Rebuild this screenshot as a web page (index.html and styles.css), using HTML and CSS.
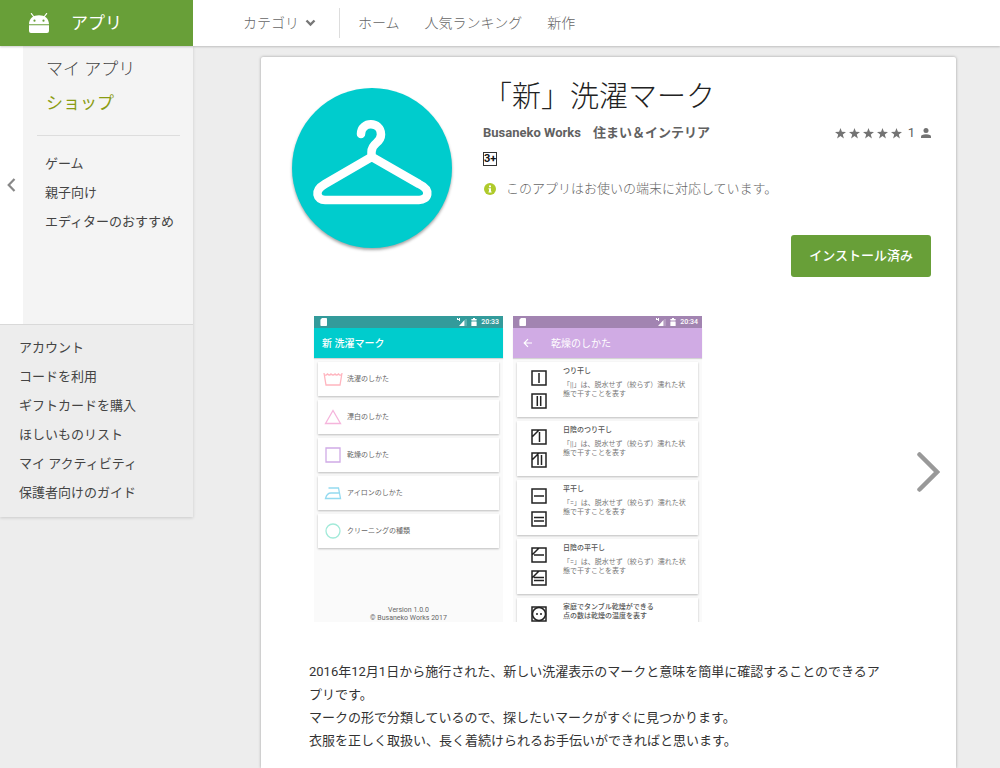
FILE: index.html
```html
<!DOCTYPE html>
<html lang="ja">
<head>
<meta charset="utf-8">
<title>「新」洗濯マーク</title>
<link rel="stylesheet" href="styles.css">
</head>
<body>
<svg class="defs" aria-hidden="true">
  <symbol id="star" viewBox="0 0 11 11"><path d="M5.5 0 6.9 3.7 11 3.9 7.8 6.4 8.9 10.4 5.5 8.1 2.1 10.4 3.2 6.4 0 3.9 4.1 3.7z"/></symbol>
  <symbol id="sd" viewBox="0 0 7 8"><path d="M2 0H6.2Q7 0 7 .8V7.200Q7 8 6.200 8H1.200Q.4 8 .4 7.200V1.800z"/></symbol>
  <symbol id="signal" viewBox="0 0 10 8"><path d="M0 0h1v1h1V0h1v3H2V2H0zM7.500 2v6H2z"/><path d="M8.500 1h1v7h-1z" opacity=".4"/></symbol>
  <symbol id="battery" viewBox="0 0 6 8"><path d="M2 0h2v1h1.500v7h-5V1H2z" opacity=".55"/><path d="M.5 4h5v4h-5zM2 0h2v1h1.500v1h-5V1H2z"/></symbol>
</svg>

<header class="topbar">
  <a class="brand" href="#">
    <svg class="brand-icon" viewBox="0 0 20 20" aria-hidden="true">
      <path d="M2.400 .6 5 4M17.600 .6 15 4" stroke="#fff" stroke-width="1.200" stroke-linecap="round"/>
      <path d="M0 11.300C0 5.500 4.300 2.300 10 2.300S20 5.500 20 11.300zM0 12.300h20V18q0 2-2 2H2q-2 0-2-2z" fill="#fff"/>
      <circle cx="5.500" cy="7.700" r="1.100" fill="#689f38"/><circle cx="14.500" cy="7.700" r="1.100" fill="#689f38"/>
    </svg>
    <span>アプリ</span>
  </a>
  <nav class="nav">
    <button class="nav-category" type="button">カテゴリ
      <svg width="11" height="8" viewBox="0 0 11 8" aria-hidden="true"><path d="M1.500 1.500 5.500 5.500 9.500 1.500" fill="none" stroke="#777" stroke-width="2.400"/></svg>
    </button>
    <div class="nav-links">
      <a href="#">ホーム</a>
      <a href="#">人気ランキング</a>
      <a href="#">新作</a>
    </div>
  </nav>
</header>

<div class="layout">
  <aside class="sidebar">
    <div class="side-main">
      <button class="side-back" type="button" aria-label="戻る">
        <svg width="9" height="14" viewBox="0 0 9 14" aria-hidden="true"><path d="M7.500 1 1.700 7l5.800 6" fill="none" stroke="#888" stroke-width="2.200"/></svg>
      </button>
      <nav class="side-panel">
        <ul class="side-primary">
          <li><a href="#">マイ アプリ</a></li>
          <li><a class="current" href="#">ショップ</a></li>
        </ul>
        <ul class="side-list side-sections">
          <li><a href="#">ゲーム</a></li>
          <li><a href="#">親子向け</a></li>
          <li><a href="#">エディターのおすすめ</a></li>
        </ul>
      </nav>
    </div>
    <nav class="side-account">
      <ul class="side-list">
        <li><a href="#">アカウント</a></li>
        <li><a href="#">コードを利用</a></li>
        <li><a href="#">ギフトカードを購入</a></li>
        <li><a href="#">ほしいものリスト</a></li>
        <li><a href="#">マイ アクティビティ</a></li>
        <li><a href="#">保護者向けのガイド</a></li>
      </ul>
    </nav>
  </aside>

  <main class="content">
    <article class="card">
      <section class="summary">
        <div class="app-icon">
          <svg viewBox="0 0 160 160" role="img" aria-label="ハンガー">
            <path d="M69 46C69 33 89 33 89 46.500C89 56 79.500 54 79.500 64V69M79.500 69 33 96C21 103 25 112 33 112H127C136 112 140 102 127 96L80 69" fill="none" stroke="#fff" stroke-width="8.500" stroke-linecap="round" stroke-linejoin="round"/>
          </svg>
        </div>
        <div class="info">
          <h1>「新」洗濯マーク</h1>
          <div class="meta">
            <a href="#">Busaneko Works</a>
            <a href="#">住まい＆インテリア</a>
            <span class="rating">
              <span class="stars" role="img" aria-label="5つ星">
                <svg><use href="#star"/></svg><svg><use href="#star"/></svg><svg><use href="#star"/></svg><svg><use href="#star"/></svg><svg><use href="#star"/></svg>
              </span>
              <span>1</span>
              <svg class="person" viewBox="0 0 10 10" aria-hidden="true"><circle cx="5" cy="2.500" r="2.500"/><path d="M0 10V8.500Q0 6.500 5 6.300 10 6.500 10 8.500V10z"/></svg>
            </span>
          </div>
          <span class="age">3+</span>
          <p class="compat">
            <svg width="12" height="12" viewBox="0 0 12 12" aria-hidden="true"><circle cx="6" cy="6" r="6" fill="#afca2b"/><path d="M5 2.500h2v1.800H5zM4.500 5.200H7v3.300h.6v1H4.500v-1H5V6.200h-.5z" fill="#fff"/></svg>
            このアプリはお使いの端末に対応しています。
          </p>
          <button class="install" type="button">インストール済み</button>
        </div>
      </section>

      <section class="gallery">
        <div class="shot shot-teal">
          <div class="status"><svg class="sd"><use href="#sd"/></svg><svg class="signal"><use href="#signal"/></svg><svg class="battery"><use href="#battery"/></svg><span>20:33</span></div>
          <div class="appbar">新 洗濯マーク</div>
          <ul class="menu">
            <li><svg viewBox="0 0 20 16"><path d="M1 2 3 14H17L19 2M1 3.500Q3 5 4.500 3Q6.500 5 8 3Q10 5 12 3Q13.500 5 15.500 3Q17 5 19 3.500" stroke="#ffb5bf"/></svg>洗濯のしかた</li>
            <li><svg viewBox="0 0 20 16"><path d="M10 1.500 17.500 14.500H2.500z" stroke="#f5b5dc"/></svg>漂白のしかた</li>
            <li><svg viewBox="0 0 20 16"><path d="M3 1h14v14H3z" stroke="#d0abe6"/></svg>乾燥のしかた</li>
            <li><svg viewBox="0 0 20 16"><path d="M5.500 3H15.500L17.500 13.500H2.500Q4 8 8 8H16.500" stroke="#94daf0"/></svg>アイロンのしかた</li>
            <li><svg viewBox="0 0 20 16"><circle cx="10" cy="8" r="7" stroke="#a2ead9"/></svg>クリーニングの種類</li>
          </ul>
          <p class="version">Version 1.0.0<br>© Busaneko Works 2017</p>
        </div>
        <div class="shot shot-purple">
          <div class="status"><svg class="sd"><use href="#sd"/></svg><svg class="signal"><use href="#signal"/></svg><svg class="battery"><use href="#battery"/></svg><span>20:34</span></div>
          <div class="appbar"><svg width="10" height="10" viewBox="0 0 10 10" aria-hidden="true"><path d="M9 5H1.500M5 1.200 1.200 5 5 8.800" fill="none" stroke="#fff" stroke-width="1.200"/></svg>乾燥のしかた</div>
          <ul class="drying">
            <li>
              <div class="marks"><svg viewBox="0 0 16 16"><path d="M1 1h14v14H1zM8 3v10"/></svg><svg viewBox="0 0 16 16"><path d="M1 1h14v14H1zM6.300 3v10M9.700 3v10"/></svg></div>
              <div><h2>つり干し</h2><p>「||」は、脱水せず（絞らず）濡れた状<br>態で干すことを表す</p></div>
            </li>
            <li>
              <div class="marks"><svg viewBox="0 0 16 16"><path d="M1 1h14v14H1zM1 8 8 1M8.500 3v10"/></svg><svg viewBox="0 0 16 16"><path d="M1 1h14v14H1zM1 8 8 1M7 3v10M10.500 3v10"/></svg></div>
              <div><h2>日陰のつり干し</h2><p>「||」は、脱水せず（絞らず）濡れた状<br>態で干すことを表す</p></div>
            </li>
            <li>
              <div class="marks"><svg viewBox="0 0 16 16"><path d="M1 1h14v14H1zM3 8h10"/></svg><svg viewBox="0 0 16 16"><path d="M1 1h14v14H1zM3 6.500h10M3 10h10"/></svg></div>
              <div><h2>平干し</h2><p>「=」は、脱水せず（絞らず）濡れた状<br>態で干すことを表す</p></div>
            </li>
            <li>
              <div class="marks"><svg viewBox="0 0 16 16"><path d="M1 1h14v14H1zM1 8 8 1M3 8h10"/></svg><svg viewBox="0 0 16 16"><path d="M1 1h14v14H1zM1 8 8 1M3 7.500h10M3 10.500h10"/></svg></div>
              <div><h2>日陰の平干し</h2><p>「=」は、脱水せず（絞らず）濡れた状<br>態で干すことを表す</p></div>
            </li>
            <li>
              <div class="marks"><svg viewBox="0 0 16 16"><path d="M1 1h14v14H1z"/><circle cx="8" cy="8" r="6.500"/><path d="M5 8h2M9 8h2"/></svg></div>
              <div><h2>家庭でタンブル乾燥ができる<br>点の数は乾燥の温度を表す</h2></div>
            </li>
          </ul>
        </div>
        <button class="next" type="button" aria-label="次へ">
          <svg width="23" height="40" viewBox="0 0 23 40" aria-hidden="true"><path d="M2.500 2.500 20 20 2.500 37.500" fill="none" stroke="#999" stroke-width="4.500" stroke-linecap="round"/></svg>
        </button>
      </section>

      <section class="description">
        <p>2016年12月1日から施行された、新しい洗濯表示のマークと意味を簡単に確認することのできるアプリです。</p>
        <p>マークの形で分類しているので、探したいマークがすぐに見つかります。</p>
        <p>衣服を正しく取扱い、長く着続けられるお手伝いができればと思います。</p>
      </section>
    </article>
  </main>
</div>
</body>
</html>
```

FILE: styles.css
```css
* { box-sizing: border-box; }

body {
  margin: 0;
  min-height: 100vh;
  display: flex;
  flex-direction: column;
  background: #ededed;
  color: #333;
  font: 13px/20px Roboto, "Noto Sans CJK JP", sans-serif;
}

h1, h2, p, ul { margin: 0; padding: 0; font-weight: 400; }
ul { list-style: none; }
a { color: inherit; text-decoration: none; }
button { border: 0; padding: 0; background: none; color: inherit; font: inherit; cursor: pointer; }
svg { display: block; flex: none; }
.defs { position: absolute; width: 0; height: 0; }

/* Top bar */
.topbar {
  display: flex;
  height: 46px;
  background: #fff;
  box-shadow: 0 1px 2px rgba(0, 0, 0, .2);
  position: relative;
}
.brand {
  width: 193px;
  padding-left: 29px;
  display: flex;
  align-items: center;
  gap: 22px;
  background: #689f38;
  color: #fff;
  font-size: 17px;
}
.brand-icon { width: 20px; height: 20px; }
.nav {
  flex: 1;
  display: flex;
  align-items: center;
  padding-left: 50px;
  color: #666;
  font-size: 14px;
  font-weight: 300;
}
.nav-category { display: flex; align-items: center; gap: 6px; padding-right: 23px; }
.nav-links {
  display: flex;
  align-items: center;
  gap: 25px;
  height: 30px;
  padding-left: 18px;
  border-left: 1px solid #ddd;
}

/* Side navigation */
.layout { flex: 1; display: flex; align-items: stretch; }
.sidebar {
  width: 193px;
  flex: none;
  align-self: flex-start;
  color: #444;
  box-shadow: 0 1px 3px rgba(0, 0, 0, .15);
}
.side-main { display: flex; background: #fff; }
.side-back { width: 23px; display: flex; align-items: center; justify-content: center; }
.side-panel { flex: 1; padding: 6px 13px 88px 14px; background: #f4f4f4; }
.side-primary { padding: 0 0 15px 9px; border-bottom: 1px solid #ddd; font-size: 17px; line-height: 34px; font-weight: 300; }
.side-primary .current { color: #8a9c12; font-weight: 400; }
.side-list { line-height: 29px; white-space: nowrap; }
.side-sections { padding: 13px 0 0 8px; }
.side-account { padding: 8px 19px 10px; background: #ededed; border-top: 1px solid #d9d9d9; }

/* App detail card */
.content { flex: 1; min-width: 0; display: flex; padding: 11px 44px 0 68px; }
.card {
  flex: 1;
  min-width: 0;
  background: #fff;
  border-radius: 2px 2px 0 0;
  box-shadow: 0 0 3px rgba(0, 0, 0, .35);
}
.summary { display: flex; gap: 31px; padding: 20px 25px 0 31px; }
.app-icon {
  width: 160px;
  height: 160px;
  margin-top: 11px;
  flex: none;
  border-radius: 50%;
  background: #00cccd;
  box-shadow: 0 2px 3px rgba(0, 0, 0, .35);
}
.info { flex: 1; display: flex; flex-direction: column; align-items: flex-start; }
h1 { font-size: 29px; line-height: 40px; font-weight: 300; color: #222; }
.meta { align-self: stretch; display: flex; gap: 12px; margin-top: 6px; color: #616161; font-weight: 700; }
.rating { margin-left: auto; display: flex; align-items: center; gap: 6px; font-weight: 400; fill: #737373; }
.stars { display: flex; gap: 3px; }
.stars svg { width: 11px; height: 11px; }
.person { width: 10px; height: 10px; }
.age {
  margin-top: 9px;
  border: 1px solid #333;
  color: #111;
  font-size: 11px;
  line-height: 12px;
  font-weight: 700;
}
.compat { display: flex; align-items: center; gap: 10px; margin-top: 13px; padding-left: 1px; color: #666; font-weight: 300; }
.install {
  align-self: flex-end;
  margin-top: 36px;
  padding: 11px 18px;
  border-radius: 3px;
  background: #689f38;
  color: #fff;
  font-weight: 500;
}

/* Screenshot strip */
.gallery { display: flex; gap: 10px; height: 306px; margin-top: 39px; padding: 0 16px 0 53px; overflow: hidden; }
.shot { width: 189px; flex: none; background: #fafafa; color: #666; font-size: 7px; line-height: 9px; }
.status { display: flex; align-items: center; gap: 4px; height: 12px; padding: 0 4px 0 6px; color: #fff; fill: #fff; font-weight: 500; }
.status .sd { width: 7px; height: 8px; margin-right: auto; }
.status .signal { width: 10px; height: 8px; }
.status .battery { width: 6px; height: 8px; }
.appbar { display: flex; align-items: center; gap: 18px; height: 30px; padding-left: 8px; color: #fff; font-size: 10px; box-shadow: 0 1px 1px rgba(0, 0, 0, .15); }
.shot-teal .status { background: #339b9b; }
.shot-teal .appbar { background: #00cccd; font-weight: 500; }
.shot-purple .status { background: #a284b1; }
.shot-purple .appbar { background: #d0abe4; padding-left: 10px; }
.menu, .drying { display: flex; flex-direction: column; gap: 4px; padding: 4px; }
.menu li, .drying li { display: flex; background: #fff; box-shadow: 0 1px 2px rgba(0, 0, 0, .25); }
.menu li { height: 34px; align-items: center; gap: 4px; padding-left: 5px; }
.menu svg { width: 20px; height: 16px; fill: none; stroke-width: 1.3; }
.version { margin-top: 54px; text-align: center; line-height: 8px; }
.drying li { height: 55px; flex: none; padding: 5px 0 0 14px; gap: 16px; white-space: nowrap; }
.drying h2 { font-size: 7px; font-weight: 500; color: #555; }
.drying p { margin-top: 5px; color: #777; }
.marks { display: flex; flex-direction: column; gap: 7px; padding-top: 3px; }
.marks svg { width: 16px; height: 16px; fill: none; stroke: #222; stroke-width: 1.5; }
.next { margin-left: auto; padding-top: 6px; }

.description { max-width: 628px; margin-top: 38px; padding: 0 0 16px 48px; line-height: 23px; }
```
